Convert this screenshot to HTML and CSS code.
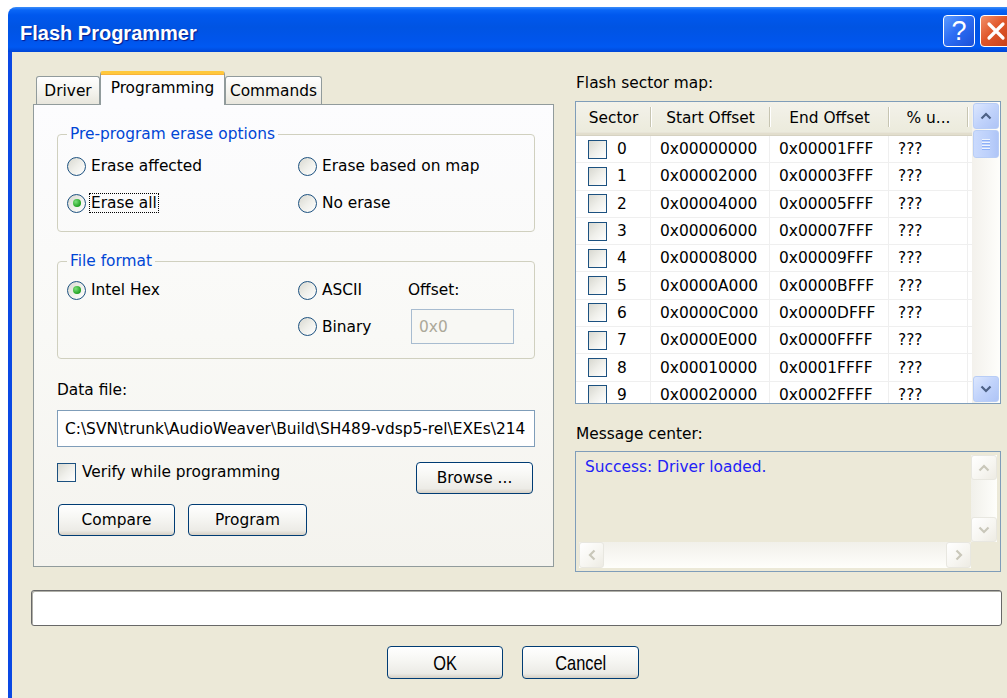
FILE: index.html
```html
<!DOCTYPE html>
<html>
<head>
<meta charset="utf-8">
<title>Flash Programmer</title>
<link rel="stylesheet" href="styles.css">
</head>
<body>
<div class="window">
  <div class="titlebar">
    <span class="title">Flash Programmer</span>
    <div class="caption-btns">
      <span class="cap-btn help">?</span>
      <span class="cap-btn close">
        <svg width="22" height="22" viewBox="0 0 22 22"><path d="M4 4 L18 18 M18 4 L4 18" stroke="#fff" stroke-width="3.2" stroke-linecap="round"/></svg>
      </span>
    </div>
  </div>

  <div class="client">
    <div class="main">
      <!-- left: tabbed settings page -->
      <div class="left">
        <div class="tabs">
          <div class="tab">Driver</div>
          <div class="tab active">Programming</div>
          <div class="tab">Commands</div>
        </div>
        <div class="panel">
          <fieldset class="group g-erase">
            <legend>Pre-program erase options</legend>
            <div class="erase-grid">
              <label class="radio"><span class="dot"></span><span>Erase affected</span></label>
              <label class="radio"><span class="dot"></span><span>Erase based on map</span></label>
              <label class="radio on"><span class="dot"></span><span class="focus">Erase all</span></label>
              <label class="radio"><span class="dot"></span><span>No erase</span></label>
            </div>
          </fieldset>

          <fieldset class="group g-format">
            <legend>File format</legend>
            <div class="format-grid">
              <label class="radio on"><span class="dot"></span><span>Intel Hex</span></label>
              <label class="radio"><span class="dot"></span><span>ASCII</span></label>
              <span class="offset-label">Offset:</span>
              <span></span>
              <label class="radio"><span class="dot"></span><span>Binary</span></label>
              <div class="offset-input">0x0</div>
            </div>
          </fieldset>

          <div class="field-label">Data file:</div>
          <div class="edit path"><span>C:\SVN\trunk\AudioWeaver\Build\SH489-vdsp5-rel\EXEs\214</span></div>

          <div class="check-row">
            <label class="check"><span class="box"></span><span>Verify while programming</span></label>
            <button class="btn browse">Browse ...</button>
          </div>
          <div class="action-row">
            <button class="btn compare">Compare</button>
            <button class="btn program">Program</button>
          </div>
        </div>
      </div>

      <!-- right: sector map and messages -->
      <div class="right">
        <div class="section-label">Flash sector map:</div>
        <div class="listview">
          <div class="lv-data">
            <div class="lv-head">
              <div class="hc c1">Sector</div>
              <div class="hc c2">Start Offset</div>
              <div class="hc c3">End Offset</div>
              <div class="hc c4">% u...</div>
            </div>
            <div class="lv-rows">
              <div class="row"><div class="c1"><span class="box"></span>0</div><div class="c2">0x00000000</div><div class="c3">0x00001FFF</div><div class="c4">???</div></div>
              <div class="row"><div class="c1"><span class="box"></span>1</div><div class="c2">0x00002000</div><div class="c3">0x00003FFF</div><div class="c4">???</div></div>
              <div class="row"><div class="c1"><span class="box"></span>2</div><div class="c2">0x00004000</div><div class="c3">0x00005FFF</div><div class="c4">???</div></div>
              <div class="row"><div class="c1"><span class="box"></span>3</div><div class="c2">0x00006000</div><div class="c3">0x00007FFF</div><div class="c4">???</div></div>
              <div class="row"><div class="c1"><span class="box"></span>4</div><div class="c2">0x00008000</div><div class="c3">0x00009FFF</div><div class="c4">???</div></div>
              <div class="row"><div class="c1"><span class="box"></span>5</div><div class="c2">0x0000A000</div><div class="c3">0x0000BFFF</div><div class="c4">???</div></div>
              <div class="row"><div class="c1"><span class="box"></span>6</div><div class="c2">0x0000C000</div><div class="c3">0x0000DFFF</div><div class="c4">???</div></div>
              <div class="row"><div class="c1"><span class="box"></span>7</div><div class="c2">0x0000E000</div><div class="c3">0x0000FFFF</div><div class="c4">???</div></div>
              <div class="row"><div class="c1"><span class="box"></span>8</div><div class="c2">0x00010000</div><div class="c3">0x0001FFFF</div><div class="c4">???</div></div>
              <div class="row"><div class="c1"><span class="box"></span>9</div><div class="c2">0x00020000</div><div class="c3">0x0002FFFF</div><div class="c4">???</div></div>
            </div>
          </div>
          <div class="vscroll">
            <div class="sb-btn"><svg width="12" height="8" viewBox="0 0 12 8"><path d="M1.5 6.5 L6 2 L10.5 6.5" fill="none" stroke="#4D6185" stroke-width="2.2"/></svg></div>
            <div class="sb-thumb"><i></i><i></i><i></i><i></i></div>
            <div class="sb-track"></div>
            <div class="sb-btn"><svg width="12" height="8" viewBox="0 0 12 8"><path d="M1.5 1.5 L6 6 L10.5 1.5" fill="none" stroke="#4D6185" stroke-width="2.2"/></svg></div>
          </div>
        </div>

        <div class="section-label msg-label">Message center:</div>
        <div class="msgbox">
          <div class="msg-text">Success: Driver loaded.</div>
          <div class="vscroll off">
            <div class="sb-btn"><svg width="12" height="8" viewBox="0 0 12 8"><path d="M1.5 6.5 L6 2 L10.5 6.5" fill="none" stroke="#C9C7BA" stroke-width="2.2"/></svg></div>
            <div class="sb-track"></div>
            <div class="sb-btn"><svg width="12" height="8" viewBox="0 0 12 8"><path d="M1.5 1.5 L6 6 L10.5 1.5" fill="none" stroke="#C9C7BA" stroke-width="2.2"/></svg></div>
          </div>
          <div class="hscroll off">
            <div class="sb-btn"><svg width="8" height="12" viewBox="0 0 8 12"><path d="M6.5 1.5 L2 6 L6.5 10.5" fill="none" stroke="#C9C7BA" stroke-width="2.2"/></svg></div>
            <div class="sb-track"></div>
            <div class="sb-btn"><svg width="8" height="12" viewBox="0 0 8 12"><path d="M1.5 1.5 L6 6 L1.5 10.5" fill="none" stroke="#C9C7BA" stroke-width="2.2"/></svg></div>
          </div>
          <div class="corner"></div>
        </div>
      </div>
    </div>

    <div class="progress"></div>

    <div class="dialog-buttons">
      <button class="btn dlg"><span>OK</span></button>
      <button class="btn dlg"><span>Cancel</span></button>
    </div>
  </div>
</div>
</body>
</html>
```

FILE: styles.css
```css
html, body {
  margin: 0;
  padding: 0;
  background: #ffffff;
  overflow: hidden;
  height: 100%;
}

body {
  font-family: "DejaVu Sans", "Noto Sans", sans-serif;
  font-size: 15.4px;
  color: #000;
}

/* ---------- window frame ---------- */
.window {
  margin: 7px 0 0 8px;
  width: 1012px;
  height: 720px;
  display: flex;
  flex-direction: column;
}

.titlebar {
  height: 45px;
  box-sizing: border-box;
  border-radius: 8px 8px 0 0;
  background: linear-gradient(to bottom,
    #3C8EF8 0px, #0A66F6 3px, #0058EE 8px, #0054E3 20px,
    #0055EB 32px, #0059F2 40px, #0046D6 45px);
  display: flex;
  align-items: flex-start;
  justify-content: space-between;
  padding: 8px 8px 0 12px;
}

.title {
  margin-top: 6px;
  font-family: "Liberation Sans", Arial, sans-serif;
  font-weight: bold;
  font-size: 20px;
  line-height: 24px;
  color: #fff;
  text-shadow: 1px 1px 1px #0A1A8A;
}

.caption-btns {
  display: flex;
  gap: 5px;
}

.cap-btn {
  width: 32px;
  height: 32px;
  box-sizing: border-box;
  border: 1px solid #fff;
  border-radius: 4px;
  display: flex;
  align-items: center;
  justify-content: center;
}

.help {
  background: linear-gradient(135deg, #5C9BFF 0%, #2D6EF4 45%, #1B50D8 100%);
  color: #fff;
  font-family: "Liberation Sans", Arial, sans-serif;
  font-size: 27px;
  line-height: 1;
}

.close {
  background: linear-gradient(135deg, #F2906A 0%, #E0562A 45%, #C6401A 100%);
}

.client {
  flex: 1;
  background: #ECE9D8;
  border-left: 4px solid #0A48E4;
  padding: 19px 18px 0 19px;
}

.main {
  display: flex;
  gap: 21px;
  margin-left: 2px;
}

/* ---------- tabs ---------- */
.left {
  width: 521px;
}

.tabs {
  display: flex;
  align-items: flex-end;
  height: 33px;
  padding-left: 3px;
}

.tab {
  height: 28px;
  box-sizing: border-box;
  border: 1px solid #919B9C;
  border-bottom: none;
  border-radius: 3px 3px 0 0;
  background: linear-gradient(to bottom, #FFFFFF, #F3F2EC 60%, #E8E6DD);
  display: flex;
  align-items: center;
  justify-content: center;
  width: 64px;
}

.tab:nth-child(3) {
  width: 97px;
}

.tab.active {
  width: 125px;
  height: 34px;
  margin-bottom: -1px;
  position: relative;
  z-index: 1;
  background: #FCFCFE;
  border-top: 3px solid #FFC83C;
  box-shadow: inset 0 1px 0 #F8B33A;
  align-items: flex-start;
  padding-top: 5px;
}

.panel {
  height: 463px;
  box-sizing: border-box;
  border: 1px solid #919B9C;
  background: linear-gradient(to bottom, #FCFCFE, #F9F9F6 50%, #F4F3EE);
  padding: 19px 18px 0 23px;
}

/* ---------- group boxes ---------- */
.group {
  margin: 0;
  min-width: 0;
  border: 1px solid #D0D0BF;
  border-radius: 4px;
}

.group legend {
  padding: 0 3px;
  margin-left: 0;
  color: #0046D5;
  line-height: 20px;
}

.g-erase {
  padding: 10px 10px 16px 9px;
}

.g-format {
  margin-top: 19px;
  padding: 7px 10px 14px 9px;
}

.erase-grid {
  display: grid;
  grid-template-columns: 231px 1fr;
  grid-auto-rows: 24px;
  row-gap: 13px;
}

.format-grid {
  display: grid;
  grid-template-columns: 231px 110px 1fr;
  grid-template-rows: 24px 35px;
  row-gap: 7px;
  align-items: center;
}

.radio {
  display: flex;
  align-items: center;
  gap: 5px;
  height: 24px;
}

.radio .dot {
  width: 19px;
  height: 19px;
  box-sizing: border-box;
  border-radius: 50%;
  border: 1px solid #1C5180;
  background: linear-gradient(135deg, #D8D8D0 0%, #EFEFEA 50%, #FFFFFF 100%);
  display: flex;
  align-items: center;
  justify-content: center;
  flex: none;
}

.radio.on .dot::after {
  content: "";
  width: 8px;
  height: 8px;
  border-radius: 50%;
  background: radial-gradient(circle at 35% 35%, #7BE07A, #21A121 70%, #108010);
}

.focus {
  outline: 1px dotted #000;
  outline-offset: 0;
  padding: 0 1px;
  margin-left: -1px;
}

.offset-input {
  margin-left: 3px;
  width: 103px;
  height: 35px;
  box-sizing: border-box;
  border: 1px solid #A8BCD0;
  background: #F8F8F4;
  color: #ACA899;
  display: flex;
  align-items: center;
  padding-left: 7px;
}

/* ---------- data file ---------- */
.field-label {
  margin-top: 19px;
  line-height: 24px;
}

.edit {
  margin-top: 8px;
  height: 37px;
  box-sizing: border-box;
  border: 1px solid #7F9DB9;
  background: #fff;
  display: flex;
  align-items: center;
  padding-left: 7px;
  white-space: nowrap;
  overflow: hidden;
}

.check-row {
  margin-top: 15px;
  display: flex;
  justify-content: space-between;
  align-items: flex-start;
}

.check {
  display: flex;
  align-items: center;
  gap: 6px;
  height: 20px;
}

.box {
  width: 19px;
  height: 19px;
  box-sizing: border-box;
  border: 1px solid #1C5180;
  background: linear-gradient(135deg, #D8D8D0 0%, #EFEFEA 50%, #FFFFFF 100%);
  flex: none;
  display: inline-block;
}

.btn {
  font-family: inherit;
  font-size: inherit;
  color: #000;
  box-sizing: border-box;
  border: 1px solid #003C74;
  border-radius: 4px;
  background: linear-gradient(to bottom, #FFFFFF 0%, #F7F7F4 40%, #ECEBE6 85%, #D6D0C5 100%);
  padding: 0;
  height: 32px;
}

.browse {
  width: 117px;
  margin-right: 2px;
}

.action-row {
  margin-top: 10px;
  display: flex;
  gap: 13px;
  padding-left: 1px;
}

.compare {
  width: 117px;
}

.program {
  width: 119px;
}

/* ---------- right column ---------- */
.right {
  width: 426px;
}

.section-label {
  line-height: 24px;
  padding-left: 1px;
  margin-bottom: 6px;
}

.msg-label {
  margin-top: 18px;
  margin-bottom: 5px;
}

.listview {
  height: 303px;
  box-sizing: border-box;
  border: 1px solid #7F9DB9;
  background: #fff;
  display: flex;
  overflow: hidden;
}

.lv-data {
  flex: 1;
  overflow: hidden;
}

.lv-head {
  display: flex;
  height: 34px;
  box-sizing: border-box;
  border-bottom: 1px solid #D6D2C2;
  box-shadow: inset 0 -2px 0 #E2DECD, inset 0 -3px 0 #E8E5D8;
  background: linear-gradient(to bottom, #F3F2EA, #EBEADB);
}

.hc {
  display: flex;
  align-items: center;
  justify-content: center;
  position: relative;
  padding-bottom: 2px;
}

.hc::after {
  content: "";
  position: absolute;
  right: 0;
  top: 5px;
  bottom: 8px;
  width: 1px;
  background: #C7C5B2;
  box-shadow: 1px 0 0 #fff;
}

.c1 { width: 75px; flex: none; }
.c2 { width: 119px; flex: none; }
.c3 { width: 119px; flex: none; }
.c4 { width: 79px; flex: none; }

.row {
  display: flex;
  height: 27.3px;
  box-sizing: border-box;
  border-bottom: 1px solid #EFEFEF;
}

.row > div {
  display: flex;
  align-items: center;
  padding-left: 9px;
  box-sizing: border-box;
  border-right: 1px solid #EFEFEF;
  white-space: nowrap;
}

.row > .c1 {
  padding-left: 12px;
  gap: 10px;
}

/* scrollbars */
.vscroll {
  width: 28px;
  flex: none;
  display: flex;
  flex-direction: column;
  padding: 1px;
  box-sizing: border-box;
  background: linear-gradient(to right, #F3F1EC, #FEFEFB);
}

.sb-btn {
  height: 26px;
  flex: none;
  box-sizing: border-box;
  border: 1px solid #B8CDF6;
  border-radius: 3px;
  background: linear-gradient(135deg, #DCE7FE 0%, #C1D3FB 50%, #AEC4F6 100%);
  display: flex;
  align-items: center;
  justify-content: center;
}

.sb-thumb {
  height: 28px;
  margin-top: 1px;
  box-sizing: border-box;
  border: 1px solid #B8CDF6;
  border-radius: 3px;
  background: linear-gradient(to right, #CADAFD, #BCD0FB 60%, #AFC5F7);
  display: flex;
  flex-direction: column;
  align-items: center;
  justify-content: center;
  gap: 2px;
}

.sb-thumb i {
  display: block;
  width: 8px;
  height: 1px;
  background: #EEF4FE;
  box-shadow: 0 1px 0 #8CB0F8;
}

.sb-track {
  flex: 1;
}

.off .sb-btn {
  border-color: #E8E7E0;
  background: linear-gradient(135deg, #FFFFFF 0%, #F6F5F0 60%, #EDEBE3 100%);
}

/* message center */
.msgbox {
  height: 121px;
  box-sizing: border-box;
  border: 1px solid #7F9DB9;
  background: #ECE9D8;
  padding: 3px;
  display: grid;
  grid-template-columns: 1fr 26px;
  grid-template-rows: 1fr 26px;
}

.msg-text {
  color: #2222F6;
  padding-left: 6px;
  line-height: 24px;
}

.msgbox .vscroll {
  width: 26px;
  padding: 0;
  background: linear-gradient(to right, #F1F0EA, #FEFEFB);
}

.msgbox .vscroll .sb-btn {
  height: 25px;
}

.hscroll {
  display: flex;
  background: linear-gradient(to bottom, #F1F0EA, #FEFEFB);
}

.hscroll .sb-btn {
  width: 25px;
  height: 26px;
}

.corner {
  background: #ECE9D8;
}

/* ---------- bottom ---------- */
.progress {
  margin-top: 18px;
  height: 36px;
  box-sizing: border-box;
  border: 1px solid #686868;
  border-radius: 3px;
  background: #fff;
  box-shadow: inset 1px 1px 0 #B0B0A8;
}

.dialog-buttons {
  margin-top: 20px;
  display: flex;
  justify-content: center;
  gap: 19px;
  padding-right: 7px;
}

.btn.dlg {
  height: 33px;
  width: 116px;
  font-family: "Liberation Sans", Arial, sans-serif;
  font-size: 21px;
}

.btn.dlg span {
  display: inline-block;
  transform: scaleX(0.78);
}

.btn.dlg + .btn.dlg {
  width: 117px;
}
```
